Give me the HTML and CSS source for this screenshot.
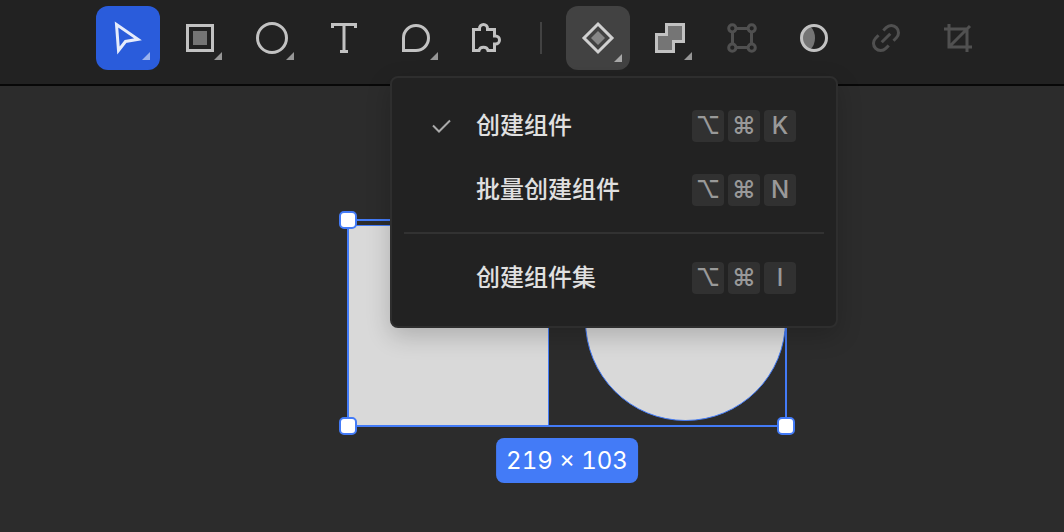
FILE: index.html
```html
<!DOCTYPE html>
<html lang="zh-CN">
<head>
<meta charset="UTF-8">
<meta name="viewport" content="width=device-width, initial-scale=1.0">
<title>创建组件</title>
<link rel="stylesheet" href="styles.css">
</head>
<body>
<header class="toolbar">
    <button class="tool active" type="button" aria-label="选择">
        <svg viewBox="0 0 64 64"><path class="line" d="M20.5 18.5L42 33.3L29.5 35.5L22.5 44.5Z"/><path class="corner" d="M54 46V54H46Z"/></svg>
    </button>
    <button class="tool" type="button" aria-label="矩形">
        <svg viewBox="0 0 64 64"><path class="line" d="M19.5 19.5H44.5V44.5H19.5Z"/><path class="tint" d="M25 25H39V39H25Z"/><path class="corner" d="M54 46V54H46Z"/></svg>
    </button>
    <button class="tool" type="button" aria-label="圆形">
        <svg viewBox="0 0 64 64"><circle class="line" cx="32" cy="32" r="14.5"/><path class="corner" d="M54 46V54H46Z"/></svg>
    </button>
    <button class="tool" type="button" aria-label="文本">
        <svg viewBox="0 0 64 64"><path class="line" d="M20.5 22V18.5H43.5V22M32 18.5V45.5M28 45.5H36"/></svg>
    </button>
    <button class="tool" type="button" aria-label="评论">
        <svg viewBox="0 0 64 64"><path class="line" d="M19.5 44.5H32A12.5 12.5 0 1 0 19.5 32Z"/><path class="corner" d="M54 46V54H46Z"/></svg>
    </button>
    <button class="tool" type="button" aria-label="插件">
        <svg viewBox="0 0 64 64"><path class="line" d="M17.5 23.5H23.5V22.5A4 4 0 0 1 31.5 22.5V23.5H38.5V30H39.5A4 4 0 0 1 39.5 38H38.5V44.5H32A4.6 4.2 0 0 0 23 44.5H17.5Z"/></svg>
    </button>
    <span class="separator"></span>
    <div class="dropdown">
        <button class="tool open" type="button" aria-label="组件" aria-haspopup="menu" aria-expanded="true">
            <svg viewBox="0 0 64 64"><path class="line" d="M32 18L46 32L32 46L18 32Z"/><path class="tint" d="M32 25L39 32L32 39L25 32Z"/><path class="corner" d="M56 48V56H48Z"/></svg>
        </button>
        <div class="menu" role="menu">
            <button class="menu-item" type="button" role="menuitem">
                <svg class="check" viewBox="0 0 20 20"><path d="M1 9.5L7 15.5L18 4.5"/></svg>
                <span class="label">创建组件</span>
                <span class="keys"><kbd>⌥</kbd><kbd>⌘</kbd><kbd>K</kbd></span>
            </button>
            <button class="menu-item" type="button" role="menuitem">
                <span class="label">批量创建组件</span>
                <span class="keys"><kbd>⌥</kbd><kbd>⌘</kbd><kbd>N</kbd></span>
            </button>
            <hr class="divider">
            <button class="menu-item" type="button" role="menuitem">
                <span class="label">创建组件集</span>
                <span class="keys"><kbd>⌥</kbd><kbd>⌘</kbd><kbd>I</kbd></span>
            </button>
        </div>
    </div>
    <button class="tool" type="button" aria-label="布尔运算">
        <svg viewBox="0 0 64 64"><path class="line filled" d="M28.5 18.5H45.5V35.5H35.5V45.5H18.5V28.5H28.5Z"/><path class="corner" d="M54 46V54H46Z"/></svg>
    </button>
    <button class="tool" type="button" aria-label="编辑路径" disabled>
        <svg viewBox="0 0 64 64"><path class="line" d="M26 22.5H38M26 41.5H38M22.5 26V38M41.5 26V38"/><circle class="line" cx="22.3" cy="22.3" r="3.6"/><circle class="line" cx="41.7" cy="22.3" r="3.6"/><circle class="line" cx="22.3" cy="41.7" r="3.6"/><circle class="line" cx="41.7" cy="41.7" r="3.6"/></svg>
    </button>
    <button class="tool" type="button" aria-label="蒙版">
        <svg viewBox="0 0 64 64"><path class="tint" d="M28 20A12.5 12.5 0 0 0 28 44Q33 39 33 32T28 20Z"/><circle class="line" cx="32" cy="32" r="12.5"/></svg>
    </button>
    <button class="tool" type="button" aria-label="链接" disabled>
        <svg viewBox="0 0 64 64"><path class="line" d="M29.3 24.5L32.2 21.6A7.2 7.2 0 0 1 42.4 31.8L39.5 34.7M34.7 39.5L31.8 42.4A7.2 7.2 0 0 1 21.6 32.2L24.5 29.3M27.7 36.3L36.3 27.7"/></svg>
    </button>
    <button class="tool" type="button" aria-label="裁剪" disabled>
        <svg viewBox="0 0 64 64"><path class="line" d="M18 23H41V46M23 18V41H46M23 41L44 20"/></svg>
    </button>
</header>
<main class="canvas">
    <div class="selection">
        <div class="shape square"></div>
        <div class="shape round"></div>
        <div class="outline"></div>
        <span class="handle top left"></span>
        <span class="handle top right"></span>
        <span class="handle bottom left"></span>
        <span class="handle bottom right"></span>
        <span class="size">219 × 103</span>
    </div>
</main>
</body>
</html>
```
FILE: styles.css
```css
* {
    box-sizing: border-box;
}
body {
    margin: 0;
    min-height: 100vh;
    display: flex;
    flex-direction: column;
    overflow: hidden;
    background-color: #2c2c2c;
    color: #e0e0e0;
    font-family: Inter, "Noto Sans CJK SC", sans-serif;
    font-size: 24px;
}
button {
    padding: 0;
    border: none;
    background: none;
    color: inherit;
    font: inherit;
    cursor: pointer;
}
/* Toolbar */
.toolbar {
    display: flex;
    align-items: center;
    gap: 8px;
    padding: 6px 72px 14px 96px;
    background-color: #222;
    border-bottom: 2px solid #080808;
}
.tool {
    display: block;
    flex: none;
    width: 64px;
    height: 64px;
    border-radius: 12px;
    color: #c2c2c2;
}
.tool svg {
    display: block;
}
.tool.active {
    background-color: #2a5cdb;
    color: #e6ecfb;
}
.tool.open {
    background-color: #424242;
    color: #d0d0d0;
}
.tool:disabled {
    color: #505050;
    cursor: default;
}
.line {
    fill: none;
    stroke: currentColor;
    stroke-width: 3;
}
.tint, .filled {
    fill: #757575;
}
.open .tint {
    fill: #868686;
}
.corner {
    fill: #969696;
}
.open .corner {
    fill: #a8a8a8;
}
.active .corner {
    fill: #9ab2ee;
}
.separator {
    width: 2px;
    height: 32px;
    margin: 0 16px 0 12px;
    background-color: #424242;
}
/* Component menu */
.dropdown {
    position: relative;
}
.menu {
    position: absolute;
    top: 70px;
    left: -176px;
    z-index: 10;
    width: 448px;
    padding: 16px 0;
    border: 2px solid #2e2e2e;
    border-radius: 8px;
    background-color: #222;
    box-shadow: 0 8px 24px rgba(0, 0, 0, 0.2);
}
.menu-item {
    display: grid;
    grid-template-columns: 20px 1fr auto;
    align-items: center;
    column-gap: 24px;
    width: 100%;
    height: 64px;
    padding: 0 40px;
    text-align: left;
}
.check {
    width: 20px;
    height: 20px;
    fill: none;
    stroke: #aaa;
    stroke-width: 2;
}
.label {
    grid-column: 2;
    padding-bottom: 4px;
    font-family: "Noto Sans CJK SC", sans-serif;
    font-weight: 500;
    line-height: 32px;
}
.keys {
    display: flex;
    gap: 4px;
}
kbd {
    width: 32px;
    height: 32px;
    border-radius: 4px;
    background-color: #313131;
    color: #999;
    font-family: Inter, sans-serif;
    font-weight: 500;
    line-height: 32px;
    text-align: center;
}
.divider {
    height: 2px;
    margin: 10px 12px 12px;
    border: none;
    background-color: #323232;
}
/* Canvas */
.canvas {
    position: relative;
    flex: 1;
}
.selection {
    position: absolute;
    top: 133px;
    left: 347px;
    width: 440px;
    height: 208px;
}
.outline {
    position: absolute;
    inset: 0;
    border: 2px solid #437bf7;
}
.shape {
    position: absolute;
    width: 201px;
    height: 201px;
    border: 1px solid #437bf7;
    background-color: #d9d9d9;
}
.square {
    bottom: 1px;
    left: 1px;
}
.round {
    top: 1px;
    right: 1px;
    border-radius: 50%;
}
.handle {
    position: absolute;
    width: 18px;
    height: 18px;
    border: 2px solid #437bf7;
    border-radius: 5px;
    background-color: #fff;
}
.top {
    top: -8px;
}
.bottom {
    bottom: -8px;
}
.left {
    left: -8px;
}
.right {
    right: -8px;
}
.size {
    position: absolute;
    top: 219px;
    left: 50%;
    transform: translateX(-50%);
    padding: 0 10px;
    border-radius: 8px;
    background-color: #437bf7;
    color: #fff;
    font-variant-numeric: tabular-nums;
    line-height: 45px;
    white-space: nowrap;
}
```
